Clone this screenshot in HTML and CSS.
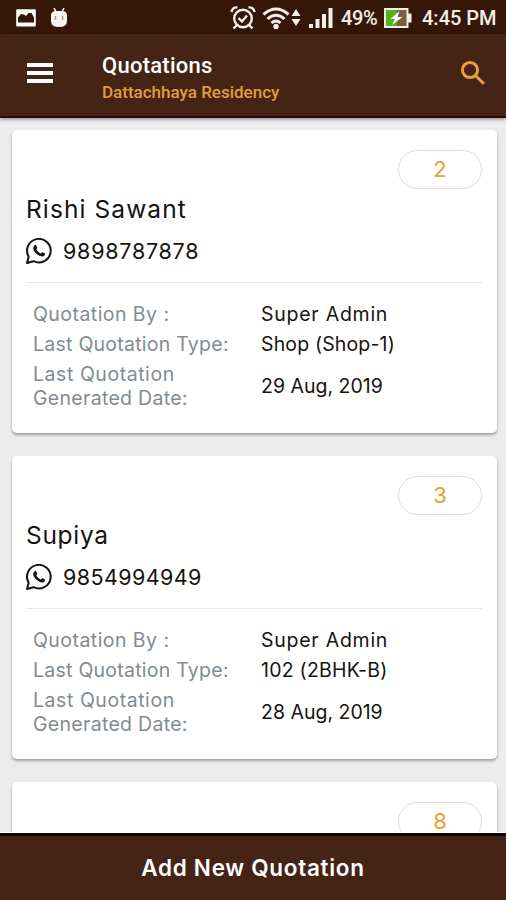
FILE: index.html
```html
<!DOCTYPE html>
<html lang="en">
<head>
<meta charset="utf-8">
<title>Quotations</title>
<link rel="stylesheet" href="styles.css">
</head>
<body>
<svg class="defs" aria-hidden="true">
  <symbol id="whatsapp" viewBox="0 0 26 26">
    <path d="M1 25 2.7 18.7A11.8 11.8 0 1 1 7.5 23.2Z" fill="none" stroke="currentColor" stroke-width="2" stroke-linejoin="round"/>
    <path d="M8.900 7.100c.5-.4 1.200-.3 1.400.3l.9 2.100c.2.6-.6 1.300-.9 1.700 1 2 2.400 3.300 4.600 4.200.5-.4 1-1.500 1.600-1.200l2.300 1.100c.8.5-.2 2.500-1.300 3-3.400 1.300-9.700-3.600-10.300-7.700-.2-1.400.7-2.700 1.700-3.500Z" fill="currentColor"/>
  </symbol>
</svg>
<div class="screen">
  <div class="status">
    <svg class="photo" width="22" height="20" viewBox="0 0 22 20"><rect x="1.200" y="1.200" width="19.600" height="17.400" rx="1" fill="#fff"/><path d="M3 14.500V9.500l3-3.500 3 .5 2 1.500 2.500-3h3l2.500 4.500v5Z" fill="#351708"/></svg>
    <svg class="droid" width="18" height="20" viewBox="0 0 18 20"><path d="M4 0 6 4M14 0 12 4" stroke="#fff" stroke-width="1.500"/><path d="M1 7Q1.500 3 6 3h6q4.500 0 5 4v6q0 6-8 6t-8-6Z" fill="#f8f5f0"/><path d="M5.500 8v4M12.500 8v4" stroke="#a59b91" stroke-width="1.500"/></svg>
    <span class="grow"></span>
    <svg class="alarm" width="26" height="24" viewBox="0 0 26 24" fill="none" stroke="#f4eee9" stroke-width="2.400"><circle cx="13" cy="12.500" r="8.800"/><path d="m8.500 12 3.500 3.500 5-6M1.500 6C2 2.500 4.500 1 7.500 1.500M24.500 6C24 2.500 21.500 1 18.500 1.500M7 19l-3.500 3.500M19 19l3.500 3.500"/></svg>
    <svg class="wifi" width="40" height="24" viewBox="0 0 40 24" fill="none" stroke="#f4eee9" stroke-width="3"><path d="M1.500 8.500q12.500-11 25 0M5.500 13q8.500-7.500 17 0M9.500 17q4.500-4 9 0"/><circle cx="14" cy="20.500" r="2.700" fill="#f4eee9" stroke="none"/><path d="m34 3 4.500 7h-9ZM34 20l4.500-7h-9Z" fill="#f4eee9" stroke="none"/></svg>
    <svg class="signal" width="25" height="22" viewBox="0 0 25 22" fill="#f4eee9"><rect x="0" y="17" width="4" height="4"/><rect x="6.500" y="12" width="4" height="9"/><rect x="13" y="7" width="4" height="14"/><rect x="19.500" y="1" width="4" height="20"/></svg>
    <span class="percent">49%</span>
    <svg class="battery" width="28" height="20" viewBox="0 0 28 20"><rect x="1" y="1" width="22.500" height="18" fill="#7d5e43" stroke="#f4eee9" stroke-width="2"/><rect x="2" y="2" width="11" height="16" fill="#4fb51b"/><path d="M24 5.500h3.500v9H24Z" fill="#f4eee9"/><path d="m15.500 3-9 8h4.500L8 17l10.500-8h-5Z" fill="#fff"/></svg>
    <span class="clock">4:45 PM</span>
  </div>
  <header class="appbar">
    <div class="menu"><i></i><i></i><i></i></div>
    <div class="titles"><h1>Quotations</h1><p>Dattachhaya Residency</p></div>
    <svg class="search" width="26" height="26" viewBox="0 0 26 26" fill="none" stroke="#e9a03a" stroke-width="3"><circle cx="10" cy="10" r="7.600"/><path d="m15.500 15.500 8.300 8.300"/></svg>
  </header>
  <main class="list">
    <article class="card">
      <span class="badge">2</span>
      <h2 class="n1">Rishi Sawant</h2>
      <div class="phone p1"><svg width="26" height="26"><use href="#whatsapp"/></svg><span>9898787878</span></div>
      <dl>
        <dt class="by">Quotation By :</dt><dd class="admin">Super Admin</dd>
        <dt class="type">Last Quotation Type:</dt><dd class="v1">Shop (Shop-1)</dd>
        <dt class="date"><span>Last Quotation</span><br><span class="gen">Generated Date:</span></dt><dd class="d">29 Aug, 2019</dd>
      </dl>
    </article>
    <article class="card">
      <span class="badge">3</span>
      <h2 class="n2">Supiya</h2>
      <div class="phone p2"><svg width="26" height="26"><use href="#whatsapp"/></svg><span>9854994949</span></div>
      <dl>
        <dt class="by">Quotation By :</dt><dd class="admin">Super Admin</dd>
        <dt class="type">Last Quotation Type:</dt><dd class="v2">102 (2BHK-B)</dd>
        <dt class="date"><span>Last Quotation</span><br><span class="gen">Generated Date:</span></dt><dd class="d">28 Aug, 2019</dd>
      </dl>
    </article>
    <article class="card"><span class="badge">8</span></article>
  </main>
  <button class="add">Add New Quotation</button>
</div>
</body>
</html>
```
FILE: styles.css
```css
* { box-sizing: border-box; }
body { margin: 0; font-family: Inter, "Open Sans", sans-serif; color: #171310; }
h1, h2, p, dl, dd { margin: 0; font-weight: 400; }
.defs { display: none; }
svg { flex: none; }
.screen { width: 506px; height: 900px; display: flex; flex-direction: column; overflow: hidden; background: #ececec; }
.status { flex: none; height: 34px; display: flex; align-items: center; background: #351708; color: #f4eee9; font: 500 20px Roboto, sans-serif; padding: 2px 10px 0 15px; white-space: nowrap; }
.droid { margin-left: 13px; }
.grow { flex: 1; }
.wifi { margin-left: 6px; }
.signal { margin-left: 7px; }
.percent { width: 37px; margin-left: 7px; letter-spacing: -.4px; }
.battery { margin-left: 6px; }
.clock { width: 74px; margin-left: 10px; }
.appbar { flex: none; height: 84px; display: flex; background: #452416; border-bottom: 2px solid #2b0905; box-shadow: 0 1px 4px #0007; padding: 0 20px 0 27px; position: relative; }
.menu { width: 26px; margin-top: 29px; display: flex; flex-direction: column; gap: 4px; }
.menu i { height: 4px; background: #fff; }
.titles { flex: 1; margin-left: 49px; padding-top: 19px; font-family: Roboto, sans-serif; }
.titles h1 { color: #fff; font-size: 22px; line-height: 26px; font-weight: 500; letter-spacing: .25px; }
.titles p { color: #e39b3e; font-size: 17px; line-height: 20px; font-weight: 500; margin-top: 3px; }
.search { margin-top: 26px; }
.list { flex: 1; min-height: 0; overflow: hidden; padding: 12px 9.5px 0 11.5px; border-bottom: 1px solid #fff; }
.card { height: 303px; margin-bottom: 23px; padding: 20px 14.5px 0; background: #fff; border-radius: 5px; box-shadow: 0 2px 3px #0005; display: flex; flex-direction: column; }
.badge { align-self: flex-end; width: 84px; height: 39px; border: 1.5px solid #dedede; border-radius: 20px; color: #e2a52d; font-size: 22px; line-height: 37px; text-align: center; }
h2 { font-size: 24.5px; line-height: 30px; margin-top: 5px; white-space: nowrap; }
.n1 { letter-spacing: 1.1px; }
.n2 { letter-spacing: .7px; }
.phone { display: flex; align-items: center; height: 28px; margin-top: 13px; font-size: 21.5px; }
.p1 { letter-spacing: .75px; }
.p2 { letter-spacing: .4px; }
.phone span { margin-left: 11px; }
dl { margin-top: 17px; border-top: 1.5px solid #e9e9e9; padding: 16px 0 0 7px; display: grid; grid-template-columns: 228px 1fr; grid-template-rows: 30px 30px 54px; font-size: 19.5px; line-height: 30px; white-space: nowrap; }
dt { color: #828b92; }
.by { letter-spacing: .45px; }
.type { letter-spacing: .25px; }
.date { line-height: 24px; padding-top: 3px; letter-spacing: .55px; }
.gen { letter-spacing: .3px; }
.admin { letter-spacing: .75px; }
.v1 { letter-spacing: .15px; }
.v2 { letter-spacing: .25px; }
.d { padding-top: 12px; }
.add { flex: none; height: 67px; border: 0; border-top: 3px solid #0e0808; background: #452416; color: #fff; font: 600 22.5px Inter, sans-serif; letter-spacing: .7px; padding: 0 0 2px; }
```
